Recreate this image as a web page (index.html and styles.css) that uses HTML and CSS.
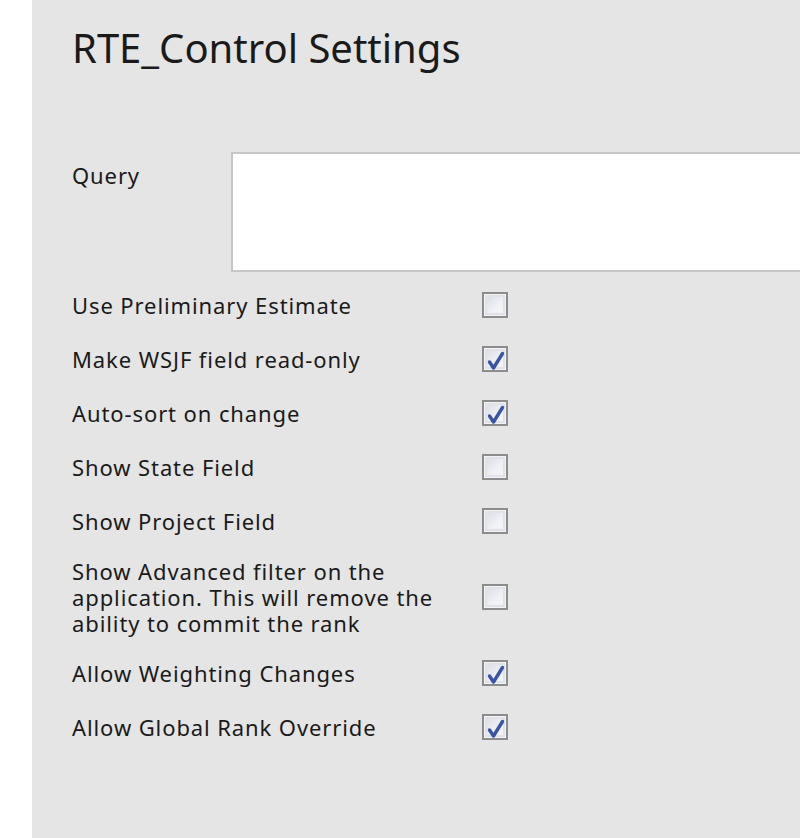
FILE: index.html
```html
<!DOCTYPE html>
<html>
<head>
<meta charset="utf-8">
<link rel="stylesheet" href="styles.css">
</head>
<body>
<div class="page">
  <div class="panel">
    <h1 class="title">RTE_Control Settings</h1>
    <div class="query-row">
      <label class="query-label">Query</label>
      <textarea class="query-input"></textarea>
    </div>
    <div class="rows">
      <div class="row">
        <div class="label">Use Preliminary Estimate</div>
        <span class="cb"></span>
      </div>
      <div class="row">
        <div class="label">Make WSJF field read-only</div>
        <span class="cb checked"><svg viewBox="0 0 26 26" width="26" height="26"><path d="M7.5 16 L11.5 22 L20.5 7.5" fill="none" stroke="#3a55a6" stroke-width="3.4" stroke-linecap="round" stroke-linejoin="round"/></svg></span>
      </div>
      <div class="row">
        <div class="label">Auto-sort on change</div>
        <span class="cb checked"><svg viewBox="0 0 26 26" width="26" height="26"><path d="M7.5 16 L11.5 22 L20.5 7.5" fill="none" stroke="#3a55a6" stroke-width="3.4" stroke-linecap="round" stroke-linejoin="round"/></svg></span>
      </div>
      <div class="row">
        <div class="label">Show State Field</div>
        <span class="cb"></span>
      </div>
      <div class="row">
        <div class="label">Show Project Field</div>
        <span class="cb"></span>
      </div>
      <div class="row">
        <div class="label">Show Advanced filter on the application. This will remove the ability to commit the rank</div>
        <span class="cb"></span>
      </div>
      <div class="row">
        <div class="label">Allow Weighting Changes</div>
        <span class="cb checked"><svg viewBox="0 0 26 26" width="26" height="26"><path d="M7.5 16 L11.5 22 L20.5 7.5" fill="none" stroke="#3a55a6" stroke-width="3.4" stroke-linecap="round" stroke-linejoin="round"/></svg></span>
      </div>
      <div class="row">
        <div class="label">Allow Global Rank Override</div>
        <span class="cb checked"><svg viewBox="0 0 26 26" width="26" height="26"><path d="M7.5 16 L11.5 22 L20.5 7.5" fill="none" stroke="#3a55a6" stroke-width="3.4" stroke-linecap="round" stroke-linejoin="round"/></svg></span>
      </div>
    </div>
  </div>
</div>
</body>
</html>
```

FILE: styles.css
```css
html, body {
  margin: 0;
  padding: 0;
  background: #ffffff;
  height: 100%;
  overflow: hidden;
}
.page {
  padding-left: 32px;
  height: 100%;
  box-sizing: border-box;
}
.panel {
  background: #e5e5e5;
  height: 100%;
  padding: 0 0 0 40px;
  box-sizing: border-box;
  font-family: "Noto Sans", "Open Sans", sans-serif;
  color: #1a1a1a;
  overflow: hidden;
}
.title {
  margin: 0;
  padding-top: 20px;
  font-size: 40px;
  font-weight: 400;
  line-height: 56px;
  height: 152px;
  box-sizing: border-box;
  white-space: nowrap;
}
.query-row {
  display: flex;
  align-items: flex-start;
  height: 120px;
}
.query-label {
  width: 159px;
  flex: none;
  font-size: 22px;
  letter-spacing: 0.9px;
  line-height: 26px;
  padding-top: 10px;
}
.query-input {
  flex: none;
  width: 620px;
  height: 120px;
  box-sizing: border-box;
  border: 2px solid #c6c6c6;
  background: #ffffff;
  margin: 0;
  resize: none;
  outline: none;
}
.rows {
  display: flex;
  flex-direction: column;
  gap: 20px;
  padding-top: 16px;
}
.row {
  display: flex;
  align-items: center;
  min-height: 34px;
}
.label {
  width: 410px;
  flex: none;
  padding-right: 20px;
  box-sizing: border-box;
  font-size: 22px;
  letter-spacing: 0.9px;
  line-height: 26px;
}
.cb {
  width: 26px;
  height: 26px;
  box-sizing: border-box;
  border: 2px solid #8c8c8c;
  background: linear-gradient(135deg, #d7dae2 0%, #eef0f3 55%, #f8f8f9 100%);
  box-shadow: inset 0 0 0 1px #f4f4f6, inset 0 0 0 3px #dfe2e8;
  position: relative;
  display: block;
  flex: none;
}
.cb svg {
  position: absolute;
  left: -2px;
  top: -2px;
}
```
